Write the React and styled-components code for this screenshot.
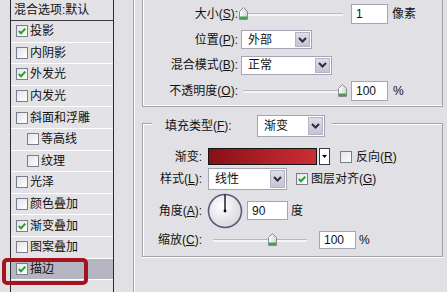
import styled, { createGlobalStyle } from "styled-components";

const GlobalStyle = createGlobalStyle`
  html, body { margin: 0; padding: 0; background: #e1e1e5; }
  body {
    font-family: "Liberation Sans", "Noto Sans CJK SC", sans-serif;
    font-size: 12px;
    color: #111;
  }
`;

const effects = [
  { name: "投影", checked: true },
  { name: "内阴影" },
  { name: "外发光", checked: true },
  { name: "内发光" },
  { name: "斜面和浮雕" },
  { name: "等高线", indent: true },
  { name: "纹理", indent: true },
  { name: "光泽" },
  { name: "颜色叠加" },
  { name: "渐变叠加", checked: true },
  { name: "图案叠加" },
  { name: "描边", checked: true, selected: true },
];

const CheckBox = ({ checked }) => (
  <Box>
    {checked && (
      <svg width="10" height="10" viewBox="0 0 10 10">
        <path d="M1.8 5 L4 7.3 L8.3 2.6" fill="none" stroke="#22a22a" strokeWidth="2" />
      </svg>
    )}
  </Box>
);

const Select = ({ width, height, value }) => (
  <SelectBox width={width} height={height}>
    <SelectText>{value}</SelectText>
    <ArrowBtn>
      <svg width="9" height="6" viewBox="0 0 9 6">
        <path d="M1 1 L4.5 4.5 L8 1" fill="none" stroke="#2c2c3c" strokeWidth="2" />
      </svg>
    </ArrowBtn>
  </SelectBox>
);

const Slider = ({ width, thumb }) => (
  <SliderBox width={width}>
    <Track />
    <Thumb style={{ left: thumb }}>
      <svg width="9" height="13" viewBox="0 0 9 13">
        <defs>
          <linearGradient id="tg" x1="0" y1="0" x2="1" y2="0">
            <stop offset="0" stopColor="#ffffff" />
            <stop offset="1" stopColor="#d4d4d8" />
          </linearGradient>
        </defs>
        <path d="M0.5 4.5 L4.5 0.5 L8.5 4.5 L8.5 12.5 L0.5 12.5 Z" fill="url(#tg)" stroke="#8a8a90" />
        <rect x="1" y="9.5" width="7" height="2.5" fill="#3fa24c" />
      </svg>
    </Thumb>
  </SliderBox>
);

const AngleDial = () => (
  <svg width="36" height="36" viewBox="0 0 36 36">
    <defs>
      <radialGradient id="dg" cx="0.4" cy="0.35" r="0.7">
        <stop offset="0" stopColor="#ffffff" />
        <stop offset="1" stopColor="#d6d6dc" />
      </radialGradient>
    </defs>
    <circle cx="18" cy="18" r="16.5" fill="url(#dg)" stroke="#5a5d76" strokeWidth="1.6" />
    <line x1="18" y1="18" x2="18" y2="1.5" stroke="#000" strokeWidth="1.3" />
    <circle cx="18" cy="18" r="1.4" fill="#000" />
  </svg>
);

export default function App() {
  return (
    <>
      <GlobalStyle />
      <Page>
        <EffectList>
          <ListHeader>混合选项:默认</ListHeader>
          {effects.map((e) => (
            <EffectItem key={e.name} indent={e.indent} selected={e.selected}>
              <CheckBox checked={e.checked} />
              <span>{e.name}</span>
            </EffectItem>
          ))}
        </EffectList>

        <OuterGroup>
          <StructureBox>
            <StructureGrid>
              <Label>大小(<u>S</u>):</Label>
              <Row>
                <Slider width={110} thumb={1} />
                <TextInput width={37} height={20} ml={3}>1</TextInput>
                <Unit ml={4}>像素</Unit>
              </Row>
              <Label>位置(<u>P</u>):</Label>
              <Row>
                <Spacer w={3} />
                <Select width={71} height={19} value="外部" />
              </Row>
              <Label>混合模式(<u>B</u>):</Label>
              <Row>
                <Spacer w={3} />
                <Select width={91} height={19} value="正常" />
              </Row>
              <Label>不透明度(<u>O</u>):</Label>
              <Row>
                <Slider width={110} thumb={100} />
                <TextInput width={37} height={20} ml={3}>100</TextInput>
                <Unit ml={5}>%</Unit>
              </Row>
            </StructureGrid>
          </StructureBox>

          <FillBox>
            <Legend>
              <LegendLabel>填充类型(<u>F</u>):</LegendLabel>
              <Select width={68} height={22} value="渐变" />
            </Legend>
            <FillGrid>
              <Label>渐变:</Label>
              <Row>
                <GradientSwatch />
                <MiniDrop>
                  <svg width="5" height="3" viewBox="0 0 5 3">
                    <path d="M0 0 L5 0 L2.5 3 Z" fill="#000" />
                  </svg>
                </MiniDrop>
                <Spacer w={10} />
                <CheckBox />
                <Unit ml={4}>反向(<u>R</u>)</Unit>
              </Row>
              <Label>样式(<u>L</u>):</Label>
              <Row>
                <Select width={79} height={22} value="线性" />
                <Spacer w={9} />
                <CheckBox checked />
                <Unit ml={3}>图层对齐(<u>G</u>)</Unit>
              </Row>
              <Label>角度(<u>A</u>):</Label>
              <Row>
                <Spacer w={-1} />
                <AngleDial />
                <TextInput width={41} height={19} ml={4}>90</TextInput>
                <Unit ml={3}>度</Unit>
              </Row>
              <Label>缩放(<u>C</u>):</Label>
              <Row>
                <Slider width={104} thumb={60} />
                <TextInput width={37} height={18} ml={7}>100</TextInput>
                <Unit ml={3}>%</Unit>
              </Row>
            </FillGrid>
          </FillBox>
        </OuterGroup>

        <Highlight />
      </Page>
    </>
  );
}

const Page = styled.div`
  position: relative;
  display: flex;
  width: 447px;
  height: 292px;
  overflow: hidden;
  background: #e1e1e5;
`;

const EffectList = styled.div`
  display: flex;
  flex-direction: column;
  flex-shrink: 0;
  width: 104px;
  margin-left: 10px;
  border-left: 1px solid #2b2b2e;
  border-right: 1px solid #2b2b2e;
  box-sizing: border-box;
  background: #e3e3e7;
`;

const ListHeader = styled.div`
  display: flex;
  align-items: center;
  height: 21px;
  padding-left: 3px;
  border-bottom: 1px solid #3a3a3e;
  box-sizing: border-box;
  line-height: 1;
  white-space: nowrap;
`;

const EffectItem = styled.div`
  display: flex;
  align-items: center;
  gap: 2px;
  height: 21.6px;
  padding-left: ${(p) => (p.indent ? 16 : 5)}px;
  border-bottom: 1px solid #ffffff;
  box-sizing: border-box;
  background: ${(p) => (p.selected ? "#b6b6c2" : "transparent")};
  line-height: 1;
  white-space: nowrap;
`;

const Box = styled.span`
  display: inline-flex;
  align-items: center;
  justify-content: center;
  flex-shrink: 0;
  width: 12px;
  height: 12px;
  box-sizing: border-box;
  border: 1px solid #7c7c8c;
  background: linear-gradient(135deg, #e4e4ea, #ffffff);
`;

const OuterGroup = styled.div`
  display: flex;
  flex-direction: column;
  flex-shrink: 0;
  width: 330px;
  margin-left: 19px;
  padding-left: 8px;
  border-left: 1px solid #a3a3a8;
  box-shadow: inset 1px 0 0 #ffffff;
`;

const StructureBox = styled.div`
  width: 301px;
  height: 107px;
  box-sizing: border-box;
  border: 1px solid #a3a3a8;
  border-top: none;
  box-shadow: inset 1px 0 0 #fff, inset 0 -1px 0 #fff;
`;

const StructureGrid = styled.div`
  display: grid;
  grid-template-columns: 95px 1fr;
  grid-template-rows: repeat(4, 20px);
  row-gap: 5.5px;
  padding-top: 4px;
  align-items: center;
`;

const Label = styled.div`
  text-align: right;
  white-space: nowrap;
  line-height: 1;
  padding-right: ${(p) => p.pr || 0}px;
`;

const Row = styled.div`
  display: flex;
  align-items: center;
  white-space: nowrap;
  line-height: 1;
`;

const Spacer = styled.span`
  flex-shrink: 0;
  width: ${(p) => Math.max(p.w, 0)}px;
  margin-left: ${(p) => Math.min(p.w, 0)}px;
`;

const Unit = styled.span`
  margin-left: ${(p) => p.ml || 0}px;
  white-space: nowrap;
`;

const TextInput = styled.div`
  display: flex;
  align-items: center;
  flex-shrink: 0;
  width: ${(p) => p.width}px;
  height: ${(p) => p.height}px;
  margin-left: ${(p) => p.ml || 0}px;
  padding-left: 4px;
  box-sizing: border-box;
  border: 1px solid #a4a4b4;
  background: #ffffff;
  font-size: 12px;
`;

const SelectBox = styled.div`
  display: flex;
  align-items: stretch;
  flex-shrink: 0;
  width: ${(p) => p.width}px;
  height: ${(p) => p.height}px;
  padding: 1px;
  box-sizing: border-box;
  border: 1px solid #a4a4b4;
  background: #ffffff;
`;

const SelectText = styled.span`
  flex: 1;
  display: flex;
  align-items: center;
  padding-left: 5px;
`;

const ArrowBtn = styled.span`
  display: flex;
  align-items: center;
  justify-content: center;
  width: 15px;
  box-sizing: border-box;
  border: 1px solid #b4b4c6;
  background: linear-gradient(#dedee8, #c3c3d3);
`;

const SliderBox = styled.div`
  position: relative;
  flex-shrink: 0;
  width: ${(p) => p.width}px;
  height: 14px;
`;

const Track = styled.div`
  margin: 6px 5px 0 5px;
  height: 2px;
  border-top: 1px solid #b8b8c0;
  background: #f4f4f6;
`;

const Thumb = styled.div`
  position: absolute;
  top: 0;
  line-height: 0;
`;

const FillBox = styled.div`
  width: 301px;
  height: 134px;
  margin-top: 16px;
  box-sizing: border-box;
  border: 1px solid #a3a3a8;
  box-shadow: inset 1px 1px 0 #fff, 0 1px 0 #fff;
`;

const Legend = styled.div`
  display: flex;
  align-items: center;
  width: fit-content;
  height: 22px;
  margin: -9px 0 0 9px;
  padding: 0 7px 0 13px;
  background: #e1e1e5;
  line-height: 1;
  white-space: nowrap;
`;

const LegendLabel = styled.span`
  width: 92px;
`;

const FillGrid = styled.div`
  display: grid;
  grid-template-columns: 59px 1fr;
  grid-template-rows: 17px 22px 35px 18px;
  column-gap: 6px;
  row-gap: 3px;
  margin-top: 11px;
  align-items: center;
`;

const GradientSwatch = styled.div`
  flex-shrink: 0;
  width: 109px;
  height: 17px;
  box-sizing: border-box;
  border: 1px solid #151515;
  background: linear-gradient(90deg, #861015, #b3222a 60%, #c92f33);
`;

const MiniDrop = styled.div`
  display: flex;
  align-items: center;
  justify-content: center;
  flex-shrink: 0;
  width: 11px;
  height: 17px;
  margin-left: 2px;
  box-sizing: border-box;
  border: 1px solid #3a3a3a;
  background: #ffffff;
`;

const Highlight = styled.div`
  position: absolute;
  left: 2px;
  top: 258px;
  width: 86px;
  height: 27px;
  box-sizing: border-box;
  border: 4px solid #a3141e;
  border-radius: 5px;
`;
